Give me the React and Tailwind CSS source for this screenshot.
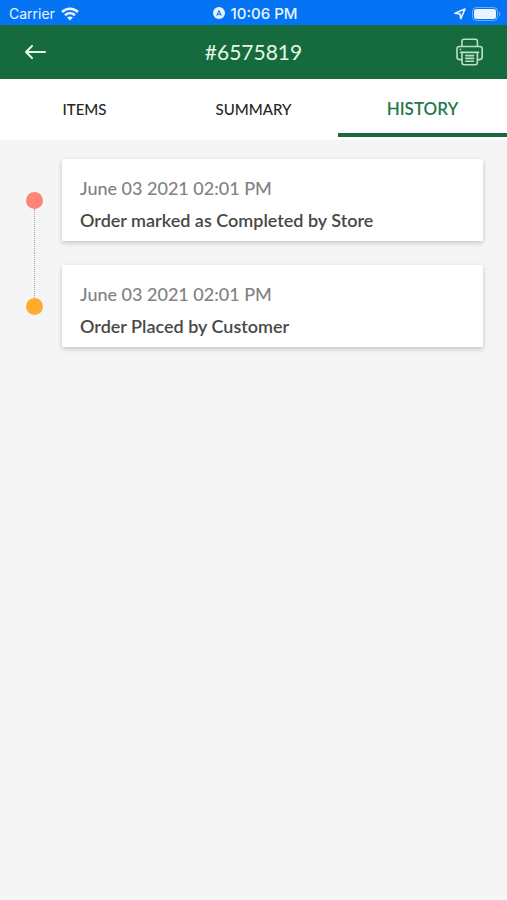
import React, { useState } from "react";

const tabs = ["ITEMS", "SUMMARY", "HISTORY"];

const events = [
  {
    id: 1,
    date: "June 03 2021 02:01 PM",
    text: "Order marked as Completed by Store",
    dot: "bg-[#ff8478]",
  },
  {
    id: 2,
    date: "June 03 2021 02:01 PM",
    text: "Order Placed by Customer",
    dot: "bg-[#ffab2e]",
  },
];

const WifiIcon = () => (
  <svg width="18" height="14" viewBox="0 0 18 14" fill="none" stroke="currentColor" strokeWidth="2.6" aria-hidden="true">
    <path d="M1 5C5.6 0.7 12.4 0.7 17 5" />
    <path d="M4 8.3C6.9 5.6 11.1 5.6 14 8.3" />
    <path d="M9 13.4L6.1 10.5C7.8 9.1 10.2 9.1 11.9 10.5Z" fill="currentColor" stroke="none" />
  </svg>
);

const NavBadgeIcon = () => (
  <svg width="12" height="12" viewBox="0 0 12 12" aria-hidden="true">
    <circle cx="6" cy="6" r="6" fill="currentColor" />
    <path d="M6 2.5L8.9 9L6 7.5L3.1 9Z" fill="#0474f4" />
    <path d="M6 5L7 7L6 6.5L5 7Z" fill="currentColor" />
  </svg>
);

const LocationIcon = () => (
  <svg width="12" height="12" viewBox="0 0 12 12" fill="none" stroke="currentColor" strokeWidth="1.6" strokeLinejoin="round" aria-hidden="true">
    <path d="M11 1L6.8 10.6L6 6L1 5.3Z" />
  </svg>
);

const BatteryIcon = () => (
  <svg width="29" height="14" viewBox="0 0 29 14" aria-hidden="true">
    <rect x="0.5" y="0.5" width="25" height="13" rx="4" fill="none" stroke="currentColor" strokeOpacity="0.45" />
    <rect x="2" y="2" width="22" height="10" rx="2.5" fill="currentColor" />
    <path d="M27 4.8C28.7 5.4 28.7 8.6 27 9.2Z" fill="currentColor" fillOpacity="0.5" />
  </svg>
);

const BackIcon = () => (
  <svg width="22" height="16" viewBox="0 0 22 16" fill="none" stroke="currentColor" strokeWidth="2" strokeLinecap="round" strokeLinejoin="round" aria-hidden="true">
    <path d="M21 8H2M8 2L2 8L8 14" />
  </svg>
);

const PrinterIcon = () => (
  <svg width="28" height="28" viewBox="0 0 28 28" fill="none" stroke="currentColor" strokeWidth="1.6" strokeLinecap="round" strokeLinejoin="round" aria-hidden="true">
    <path d="M7 8.5V3.2C7 1.9 7.7 1.2 9 1.2H20.4C21.7 1.2 22.4 1.9 22.4 3.2V8.5" />
    <path d="M7 21.6H4.5C2.9 21.6 2 20.7 2 19.1V11C2 9.4 2.9 8.5 4.5 8.5H24.7C26.3 8.5 27.2 9.4 27.2 11V19.1C27.2 20.7 26.3 21.6 24.7 21.6H22.4" />
    <path d="M5.6 14.4H23.6" />
    <path d="M7 14.4V24.6C7 26 7.7 26.8 9 26.8H20.4C21.7 26.8 22.4 26 22.4 24.6V14.4" />
    <path d="M10.8 17.6H18.6M10.8 20.4H18.6M10.8 23.2H18.6" />
    <path d="M5.4 11.4H5.6" />
  </svg>
);

const StatusBar = () => (
  <div className="grid grid-cols-3 items-center h-[25px] pl-[9px] pr-1.5 pt-0.5 bg-[#0474f4] text-[#e8f4ff] font-['Inter','Roboto',sans-serif] text-sm">
    <div className="flex items-center gap-1.5">
      <span>Carrier</span>
      <WifiIcon />
    </div>
    <div className="flex items-center justify-center gap-1.5 text-[15px] font-medium whitespace-nowrap">
      <NavBadgeIcon />
      <span>10:06 PM</span>
    </div>
    <div className="flex items-center justify-end gap-1.5">
      <LocationIcon />
      <BatteryIcon />
    </div>
  </div>
);

const App = () => {
  const [active, setActive] = useState("HISTORY");

  return (
    <div className="min-h-screen bg-[#f5f5f5] font-['Lato',sans-serif]">
      <StatusBar />

      <header className="flex items-center justify-between h-[54px] px-6 bg-[#156b3e] text-[#e6f7e6]">
        <button type="button" aria-label="Back" className="flex items-center w-7">
          <BackIcon />
        </button>
        <h1 className="text-[21px]">#6575819</h1>
        <button type="button" aria-label="Print" className="text-[#b9dfc0]">
          <PrinterIcon />
        </button>
      </header>

      <nav className="grid grid-cols-3 h-[61px] pb-[3px] bg-white">
        {tabs.map((tab) => (
          <button
            key={tab}
            type="button"
            onClick={() => setActive(tab)}
            className={
              active === tab
                ? "border-b-4 border-[#156b3e] pt-1.5 text-[17px] font-semibold text-[#1f7a4a]"
                : "border-b-4 border-transparent pt-1.5 text-[15px] font-medium text-[#262626]"
            }
          >
            {tab}
          </button>
        ))}
      </nav>

      {/* Timeline */}
      <ol className="pt-[7px] pl-[26px] pr-6">
        {events.map((event, idx) => (
          <li key={event.id} className="flex gap-[19px]">
            <div className="flex flex-col items-center w-[17px]">
              <span className={idx === 0 ? "flex-1" : "flex-1 border-l border-dotted border-[#a8a8a8]"} />
              <span className={`size-[17px] rounded-full ${event.dot}`} />
              <span className={idx === events.length - 1 ? "flex-1" : "flex-1 border-l border-dotted border-[#a8a8a8]"} />
            </div>
            <div className="flex-1 my-3 px-[18px] pt-[13px] pb-[5px] bg-white rounded-[1px] shadow-[0_2px_5px_rgba(0,0,0,0.2)]">
              <p className="text-lg leading-8 font-medium text-[#828282]">{event.date}</p>
              <p className="text-lg leading-8 font-semibold text-[#484848]">{event.text}</p>
            </div>
          </li>
        ))}
      </ol>
    </div>
  );
};

export default App;
